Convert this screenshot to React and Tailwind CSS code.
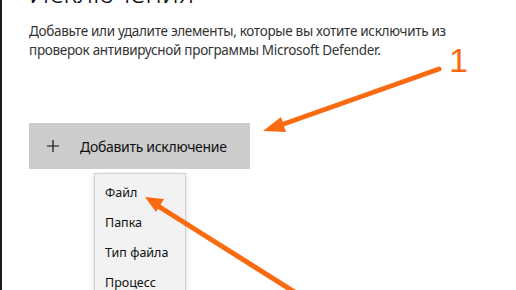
import React from 'react';

const font = { fontFamily: '"Noto Sans", "Open Sans", sans-serif' };

function Arrows() {
  return (
    <svg className="absolute inset-0 pointer-events-none" width="516" height="290" viewBox="0 0 516 290">
      {/* arrow 1 */}
      <line x1="437" y1="69" x2="276" y2="126" stroke="#fa6a10" strokeWidth="5" strokeLinecap="round" />
      <polygon points="261,131 279,117 284,132" fill="#fa6a10" />
      {/* arrow 2 */}
      <line x1="302" y1="298" x2="156" y2="206" stroke="#fa6a10" strokeWidth="5" strokeLinecap="round" />
      <polygon points="143,197 162,199 154,212" fill="#fa6a10" />
      <text x="447" y="72" fill="#fa6a10" fontSize="34" fontFamily="Liberation Sans, sans-serif">1</text>
    </svg>
  );
}

function Plus() {
  return (
    <svg width="12" height="12" viewBox="0 0 12 12" className="ml-[18px]">
      <path d="M6 0V12M0 6H12" stroke="#111" strokeWidth="1.2" />
    </svg>
  );
}

export default function App() {
  return (
    <div className="relative w-[516px] h-[290px] overflow-hidden bg-white border-l-2 border-[#1a1a1a]" style={font}>
      <div className="pl-[27px]">
        <h1 className="text-[28px] font-light leading-[36px] mt-[-26px] text-[#111]">Исключения</h1>
        <p className="mt-[12px] text-[13.5px] tracking-[-0.3px] leading-[19px] text-[#333] w-[450px]">
          Добавьте или удалите элементы, которые вы хотите исключить из проверок антивирусной программы Microsoft Defender.
        </p>

        <button className="mt-[63px] flex items-center w-[221px] h-[46px] bg-[#cccccc] text-[#111]">
          <Plus />
          <span className="ml-[21px] text-[14px] tracking-[-0.3px]">Добавить исключение</span>
        </button>

        <div className="mt-[4px] ml-[65px] w-[92px] bg-[#f2f2f2] border border-[#d0d0d0] shadow-[0_2px_6px_rgba(0,0,0,0.15)] py-[4px] text-[12.5px] text-[#111]">
          <div className="h-[30px] flex items-center px-[10px]">Файл</div>
          <div className="h-[30px] flex items-center px-[10px]">Папка</div>
          <div className="h-[30px] flex items-center px-[10px]">Тип файла</div>
          <div className="h-[30px] flex items-center px-[10px]">Процесс</div>
        </div>
      </div>
      <Arrows />
    </div>
  );
}
